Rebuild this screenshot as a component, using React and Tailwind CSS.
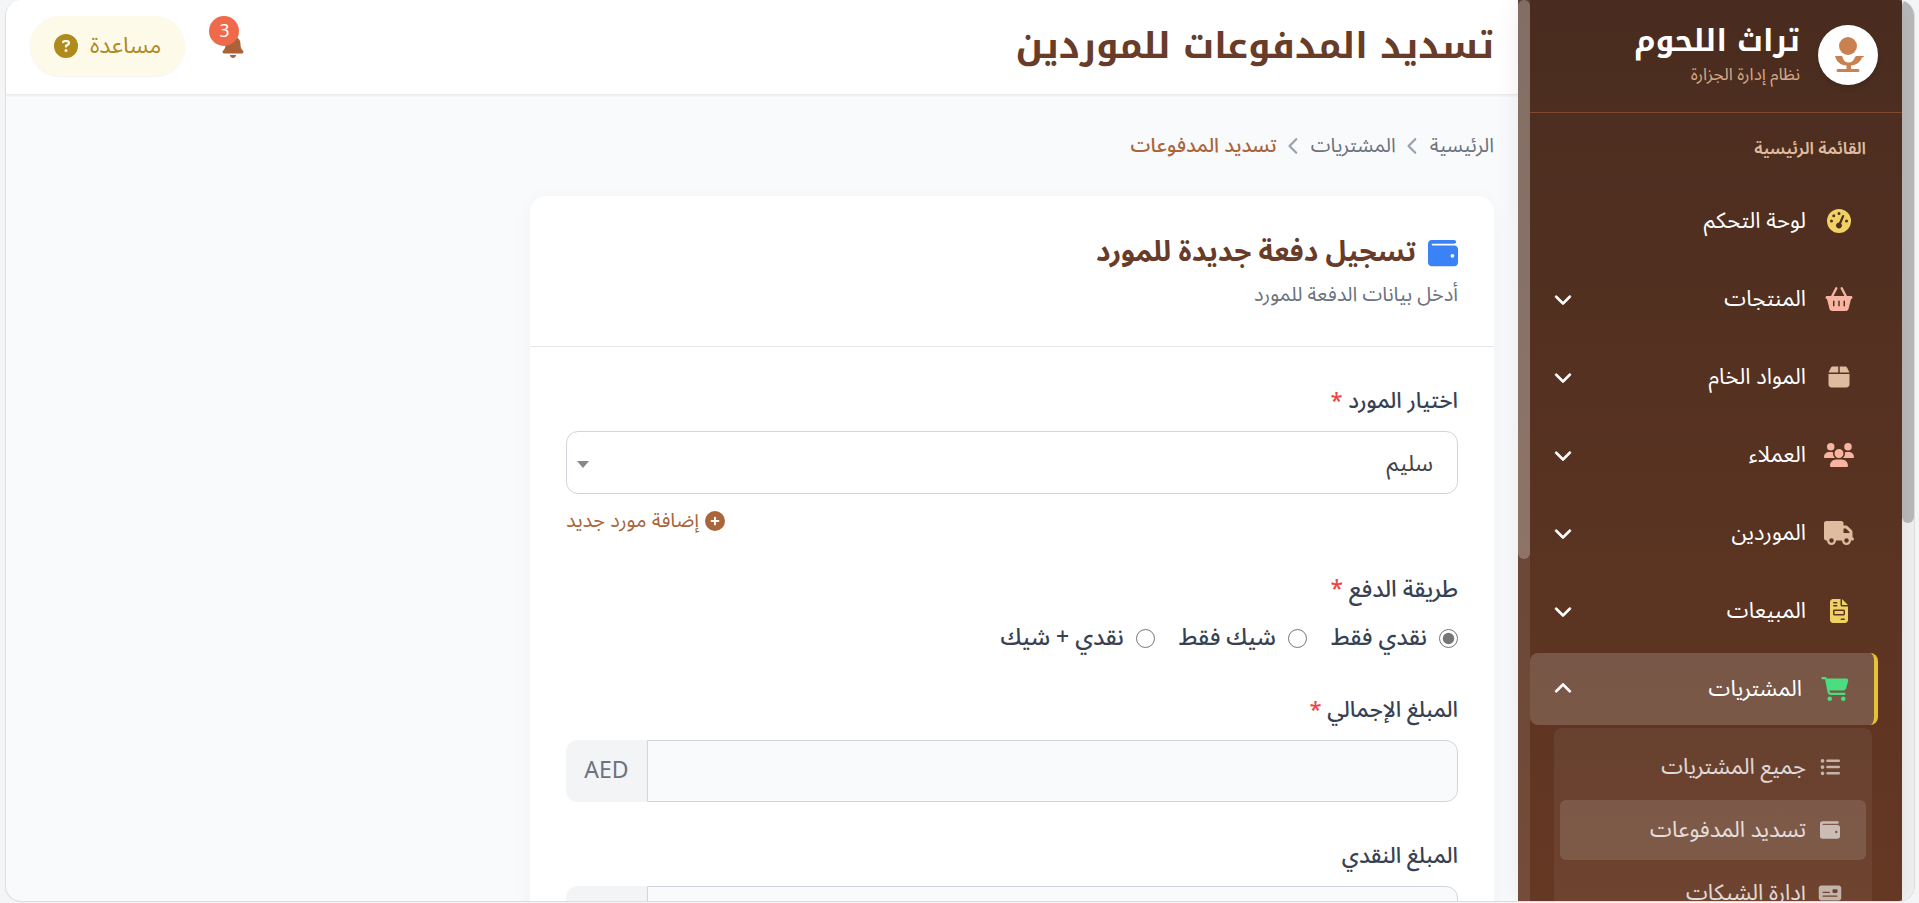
import React, { useState } from "react";
import {
  FaBasketShopping,
  FaBell,
  FaBox,
  FaCartShopping,
  FaChevronDown,
  FaChevronLeft,
  FaChevronUp,
  FaCirclePlus,
  FaCircleQuestion,
  FaFileInvoice,
  FaGaugeHigh,
  FaListUl,
  FaMoneyCheck,
  FaTruck,
  FaUsers,
  FaWallet,
} from "react-icons/fa6";

const menu = [
  { label: "لوحة التحكم", icon: FaGaugeHigh, color: "text-[#f0d264]" },
  { label: "المنتجات", icon: FaBasketShopping, color: "text-[#f8b4a0]", sub: true },
  { label: "المواد الخام", icon: FaBox, color: "text-[#dfbc9f]", sub: true },
  { label: "العملاء", icon: FaUsers, color: "text-[#f8b4a0]", sub: true },
  { label: "الموردين", icon: FaTruck, color: "text-[#dfbc9f]", sub: true },
  { label: "المبيعات", icon: FaFileInvoice, color: "text-[#f0d264]", sub: true },
  { label: "المشتريات", icon: FaCartShopping, color: "text-[#4ade80]", sub: true, open: true },
];

const purchases = [
  { label: "جميع المشتريات", icon: FaListUl },
  { label: "تسديد المدفوعات", icon: FaWallet, active: true },
  { label: "إدارة الشيكات", icon: FaMoneyCheck },
];

const methods = [
  { id: "cash", label: "نقدي فقط" },
  { id: "check", label: "شيك فقط" },
  { id: "both", label: "نقدي + شيك" },
];

function Logo() {
  return (
    <span className="flex size-15 shrink-0 items-center justify-center rounded-full bg-white shadow-md">
      <svg viewBox="0 0 32 36" className="h-9 w-8" fill="#c8824f">
        <circle cx="16" cy="9" r="9" />
        <path d="M3 19h7.200c1 4.500 3.300 6.500 6.300 6.500s5.300-2 6.500-5.300c.3-.8.9-1.200 1.700-1.200H32c0 .8-.5 1.200-2 1.400-1.800 4.600-5.500 7.600-11 8.200V32h7a1.500 1.500 0 0 1 0 3H6a1.500 1.500 0 0 1 0-3h8.500v-3.400C8.500 28 4.500 25 3 19z" />
      </svg>
    </span>
  );
}

function NavItem({ item }) {
  const Icon = item.icon;
  const Chevron = item.open ? FaChevronUp : FaChevronDown;
  return (
    <button
      className={
        item.open
          ? "flex h-18 w-full items-center rounded-lg border-r-4 border-[#e8c236] bg-white/17 px-6 text-white"
          : "flex h-18 w-full items-center rounded-lg px-6 text-white"
      }
    >
      <Icon className={`h-6 w-[30px] ${item.color}`} />
      <span className="ms-[18px] flex-1 text-start text-[22px]">{item.label}</span>
      {item.sub && <Chevron className="stroke-current stroke-[20] text-lg" />}
    </button>
  );
}

function Sidebar() {
  return (
    <aside className="z-10 flex w-96 shrink-0 bg-linear-to-b from-[#492c1f] to-[#653823] shadow-[0_0_24px_rgba(0,0,0,0.07)]">
      <div className="min-w-0 flex-1 overflow-hidden">
        <div className="flex h-[113px] items-center gap-[18px] border-b border-[#804a30] px-6 pb-0.5">
          <Logo />
          <div className="text-white">
            <h1 className="font-['Noto_Kufi_Arabic','Noto_Sans_Arabic','Noto_Sans','DejaVu_Sans',sans-serif] text-[30px] leading-10 font-bold">تراث اللحوم</h1>
            <p className="text-[17px] leading-7 text-[#d6a888]">نظام إدارة الجزارة</p>
          </div>
        </div>
        <h2 className="px-9 py-6 text-[17px] leading-6 font-semibold text-[#dfbc9f]">القائمة الرئيسية</h2>
        <nav className="flex flex-col gap-1.5 ps-6">
          {menu.map((item) => (
            <NavItem key={item.label} item={item} />
          ))}
        </nav>
        <div className="ms-[30px] me-6 mt-[3px] flex flex-col gap-[3px] rounded-lg bg-white/6 px-1.5 pt-[9px]">
          {purchases.map(({ label, icon: Icon, active }) => (
            <a
              key={label}
              href="#"
              className={
                active
                  ? "flex h-15 items-center rounded-md bg-white/12 px-6 text-[22px] text-white/80"
                  : "flex h-15 items-center rounded-md px-6 text-[22px] text-white/80"
              }
            >
              <Icon className="h-5 w-6 text-white/60" />
              <span className="ms-3">{label}</span>
            </a>
          ))}
        </div>
      </div>
      <div className="w-3 shrink-0 bg-white/10">
        <div className="h-[62%] rounded-full bg-white/24" />
      </div>
    </aside>
  );
}

function Label({ htmlFor, required, children }) {
  return (
    <label htmlFor={htmlFor} className="block text-[22px] leading-[30px] font-medium text-[#374151]">
      {children} {required && <span className="text-[#ef4444]">*</span>}
    </label>
  );
}

function AmountField({ id, label, required }) {
  return (
    <div>
      <Label htmlFor={id} required={required}>{label}</Label>
      <div className="mt-[15px] flex h-[62px]">
        <input id={id} className="min-w-0 flex-1 rounded-s-xl border border-[#d1d5db] bg-[#f9fafc] px-4 text-[23px] outline-none" />
        <span className="flex w-[81px] items-center justify-center rounded-e-xl bg-[#f2f4f5] text-[23px] text-[#6b7280]">AED</span>
      </div>
    </div>
  );
}

export default function App() {
  const [method, setMethod] = useState("cash");

  return (
    <div dir="rtl" className="h-screen overflow-hidden bg-[#f4f5f6] pr-1 pb-px pl-[5px] font-['Noto_Sans_Arabic','Noto_Sans','DejaVu_Sans',sans-serif]">
      <div className="flex h-full overflow-hidden rounded-2xl border border-t-0 border-[#dcdddf] bg-[#f9fafc]">
        <div className="w-3 shrink-0 bg-[#f0f0f0]">
          <div className="h-[58%] rounded-full bg-[#b9b9b9]" />
        </div>
        <Sidebar />
        <div className="min-w-0 flex-1">
          <header className="flex h-[95px] items-center justify-between border-b border-[#ebebec] bg-white px-6 pb-0.5 shadow-xs">
            <h1 className="font-['Noto_Kufi_Arabic','Noto_Sans_Arabic','Noto_Sans','DejaVu_Sans',sans-serif] text-[36px] leading-[54px] font-bold text-[#683c28]">تسديد المدفوعات للموردين</h1>
            <div className="flex items-center gap-9">
              <button className="relative text-2xl text-[#ab6237]" aria-label="الإشعارات">
                <FaBell />
                <span className="absolute -top-[18px] -left-3 flex size-[30px] items-center justify-center rounded-full bg-[#ef6a4a] text-lg text-white">3</span>
              </button>
              <button className="flex h-15 items-center gap-3 rounded-full bg-[#fefaea] px-6 text-[23px] text-[#af8a1c] shadow-xs">
                مساعدة
                <FaCircleQuestion className="text-2xl" />
              </button>
            </div>
          </header>

          <main className="p-6">
            <nav className="flex h-[53px] items-center gap-2 text-xl text-[#6b7280]">
              <a href="#">الرئيسية</a>
              <FaChevronLeft className="text-lg text-[#9ca3af]" />
              <a href="#">المشتريات</a>
              <FaChevronLeft className="text-lg text-[#9ca3af]" />
              <span className="font-medium text-[#a9653b]">تسديد المدفوعات</span>
            </nav>

            <section className="mt-6 w-full max-w-[964px] rounded-2xl bg-white shadow-[0_4px_20px_rgba(0,0,0,0.04)]">
              <div className="h-[151px] border-b border-[#e5e7eb] px-9 pt-9">
                <h2 className="flex items-center gap-3 text-[28px] leading-[42px] font-bold text-[#683c28]">
                  <FaWallet className="text-3xl text-[#3b82f6]" />
                  تسجيل دفعة جديدة للمورد
                </h2>
                <p className="mt-1.5 text-xl leading-[30px] text-[#6b7280]">أدخل بيانات الدفعة للمورد</p>
              </div>
              <form className="flex flex-col gap-[39px] px-9 py-[39px]">
                <div>
                  <Label htmlFor="supplier" required>اختيار المورد</Label>
                  <div className="relative mt-[15px]">
                    <select id="supplier" className="h-[63px] w-full appearance-none rounded-xl border border-[#d1d5db] bg-white px-6 pt-1 text-[23px] text-[#444]">
                      <option>سليم</option>
                    </select>
                    <span className="pointer-events-none absolute top-[30px] left-[11px] border-x-6 border-t-7 border-x-transparent border-t-[#888]" />
                  </div>
                  <div className="mt-3 flex justify-end">
                    <button type="button" className="flex items-center gap-1.5 text-xl leading-[30px] text-[#a9653b]">
                      <FaCirclePlus />
                      إضافة مورد جديد
                    </button>
                  </div>
                </div>

                <fieldset className="pb-[3px]">
                  <legend className="text-[23px] leading-[30px] font-medium text-[#374151]">
                    طريقة الدفع <span className="text-[#ef4444]">*</span>
                  </legend>
                  <div className="mt-[18px] flex gap-6">
                    {methods.map((m) => (
                      <label key={m.id} className="flex items-center gap-3 text-[23px] leading-[30px] font-medium text-[#374151]">
                        <input
                          type="radio"
                          name="method"
                          checked={method === m.id}
                          onChange={() => setMethod(m.id)}
                          className="size-[19px] accent-[#767676]"
                        />
                        {m.label}
                      </label>
                    ))}
                  </div>
                </fieldset>

                <AmountField id="total" label="المبلغ الإجمالي" required />
                <AmountField id="cash-amount" label="المبلغ النقدي" />
              </form>
            </section>
          </main>
        </div>
      </div>
    </div>
  );
}
